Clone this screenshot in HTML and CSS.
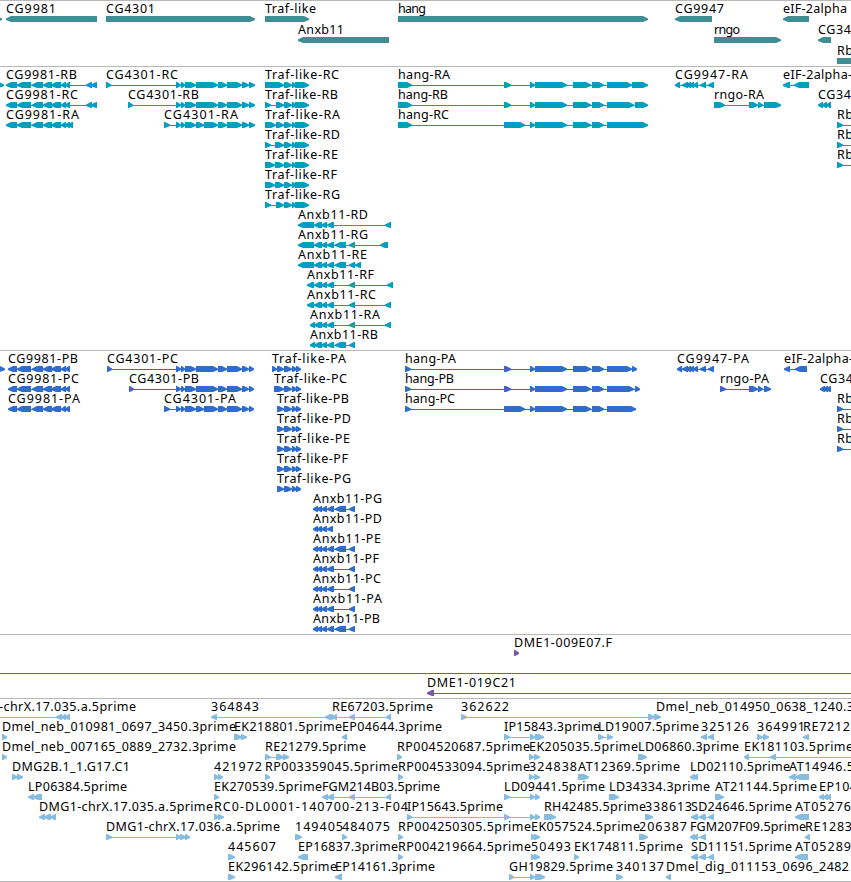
FILE: index.html
```
<!DOCTYPE html>
<html>

<head>
	<meta charset="utf-8">
	<title>Genome browser</title>
	<link rel="stylesheet" href="styles.css">
</head>

<body>
	<div id="browser">
		<svg class="track genes" id="genes" width="851" height="65"></svg>
		<svg class="track transcripts" id="transcripts" width="851" height="283"></svg>
		<svg class="track proteins" id="proteins" width="851" height="283"></svg>
		<svg class="track bacs" id="bacs" width="851" height="63"></svg>
		<svg class="track ests" id="ests" width="851" height="182"></svg>
	</div>
	<script src="tracks.js"></script>
</body>

</html>
```

FILE: styles.css
```
body {
	margin: 0;
	background: #fff;
}

#browser {
	width: 851px;
	height: 881px;
	overflow: hidden;
	border-bottom: 1px solid #b8b8b8;
}

.track {
	display: block;
	border-top: 1px solid #b8b8b8;
	overflow: hidden;
}

.track text {
	font-family: "Noto Sans", "DejaVu Sans", sans-serif;
	font-size: 12.5px;
	fill: #000;
}

.genes {
	fill: #408e94;
}

.transcripts {
	fill: #009ec0;
}

.proteins {
	fill: #306ccc;
}

.bacs {
	fill: #7755aa;
}

.ests {
	fill: #86bcdf;
}
```

FILE: tracks.js
```
// feature: [row, strand, label, label end, blocks, line end (optional)]
var hangEnd = ' 530-535 535-567 573-591 592-604 ';
var cgLeft = '17-31 32-43 43-52 51-61 61-66 65-70';
var cgRight = ' 176-181 181-185 185-196 196-218 218-227 227-242 242-249 ';
var cgShort = ' 176-181 181-185 185-196 196-204 204-218 218-227 227-242 242-249 ';
var trafR = ' 284-292 292-296 295-309';
var trafP = ' 284-292 292-297 296-301';
var anxR = ' 314-322 321-327 327-334';
var anxP = '313-318 317-322 321-327 327-334';

var tracks = {
	genes: [
		[0, '+', '', 0, '-6-2'],
		[0, '-', 'CG9981', 56, '6-97'],
		[0, '+', 'CG4301', 155, '106-255'],
		[0, '+', 'Traf-like', 316, '265-309'],
		[1, '-', 'Anxb11', 344, '298-389'],
		[0, '+', 'hang', 426, '398-648'],
		[0, '-', 'CG9947', 724, '675-712'],
		[1, '+', 'rngo', 740, '714-781'],
		[0, '-', 'eIF-2alpha', 847, '783-809'],
		[1, '-', 'CG34', 851, '818-831'],
		[2, '+', 'Rb', 853, '837-870']
	],
	transcripts: [
		[0, '+', '', 0, '-4-4'],
		[0, '-', 'CG9981-RB', 77, '6-17 ' + cgLeft + ' 86-92 91-97'],
		[1, '-', 'CG9981-RC', 78, '6-17 ' + cgLeft + ' 86-92 91-97'],
		[2, '-', 'CG9981-RA', 79, '6-17 ' + cgLeft + ' 68-73'],
		[0, '+', 'CG4301-RC', 178, '106-111' + cgRight + '249-255'],
		[1, '+', 'CG4301-RB', 199, '128-133' + cgRight + '249-255'],
		[2, '+', 'CG4301-RA', 238, '164-170' + cgShort + '249-255'],
		[0, '+', 'Traf-like-RC', 339, '265-284' + trafR],
		[1, '+', 'Traf-like-RB', 338, '265-271 276-284' + trafR],
		[2, '+', 'Traf-like-RA', 340, '265-276 276-284' + trafR],
		[3, '+', 'Traf-like-RD', 340, '265-271 275-284' + trafR],
		[4, '+', 'Traf-like-RE', 338, '265-275 275-284' + trafR],
		[5, '+', 'Traf-like-RF', 337, '265-275 275-284' + trafR],
		[6, '+', 'Traf-like-RG', 340, '265-271 276-284' + trafR],
		[7, '-', 'Anxb11-RD', 368, '298-314' + anxR + ' 385-391'],
		[8, '-', 'Anxb11-RG', 368, '298-314' + anxR + ' 335-346 349-355 380-388'],
		[9, '-', 'Anxb11-RE', 367, '298-314' + anxR + ' 335-346 349-355 355-361'],
		[10, '-', 'Anxb11-RF', 374, '307-314' + anxR + ' 349-355 387-393'],
		[11, '-', 'Anxb11-RC', 376, '307-314' + anxR + ' 349-355 385-391'],
		[12, '-', 'Anxb11-RA', 380, '310-315' + anxR + ' 349-355 385-391'],
		[13, '-', 'Anxb11-RB', 378, '310-315' + anxR + ' 335-346 349-355'],
		[0, '+', 'hang-RA', 450, '398-412 504-511' + hangEnd + '607-632 632-648'],
		[1, '+', 'hang-RB', 448, '398-412 504-511' + hangEnd + '607-634 635-648'],
		[2, '+', 'hang-RC', 449, '398-412 504-525' + hangEnd + '607-648'],
		[0, '-', 'CG9947-RA', 748, '675-680 682-688 686-691 689-694 693-698 700-706 708-714'],
		[1, '+', 'rngo-RA', 764, '714-725 749-758 758-763 764-781'],
		[0, '-', 'eIF-2alpha-', 852, '783-790 794-809'],
		[1, '-', 'CG34', 851, '818-823 822-827 826-831'],
		[2, '+', 'Rb', 853, '837-843', 851],
		[3, '+', 'Rb', 853, '837-843', 851],
		[4, '+', 'Rb', 853, '837-843', 851]
	],
	proteins: [
		[0, '+', '', 0, '-1-5'],
		[0, '-', 'CG9981-PB', 78, '8-17 ' + cgLeft],
		[1, '-', 'CG9981-PC', 79, '8-17 ' + cgLeft],
		[2, '-', 'CG9981-PA', 80, '8-17 ' + cgLeft],
		[0, '+', 'CG4301-PC', 178, '107-112' + cgRight + '249-254'],
		[1, '+', 'CG4301-PB', 199, '129-134' + cgRight + '249-254'],
		[2, '+', 'CG4301-PA', 236, '164-170' + cgShort + '249-254'],
		[0, '+', 'Traf-like-PA', 346, '272-277 277-284' + trafP],
		[1, '+', 'Traf-like-PC', 347, '274-284' + trafP],
		[2, '+', 'Traf-like-PB', 349, '277-284' + trafP],
		[3, '+', 'Traf-like-PD', 351, '277-284' + trafP],
		[4, '+', 'Traf-like-PE', 350, '277-284' + trafP],
		[5, '+', 'Traf-like-PF', 348, '277-284' + trafP],
		[6, '+', 'Traf-like-PG', 351, '277-284' + trafP],
		[7, '-', 'Anxb11-PG', 382, anxP + ' 335-346 349-355'],
		[8, '-', 'Anxb11-PD', 382, '313-318 317-322 321-327 327-333'],
		[9, '-', 'Anxb11-PE', 381, anxP + ' 335-346 349-355'],
		[10, '-', 'Anxb11-PF', 379, anxP + ' 349-355'],
		[11, '-', 'Anxb11-PC', 381, anxP + ' 349-355'],
		[12, '-', 'Anxb11-PA', 382, anxP + ' 349-355'],
		[13, '-', 'Anxb11-PB', 380, anxP + ' 335-346 349-355'],
		[0, '+', 'hang-PA', 456, '405-411 504-511' + hangEnd + '607-632 632-637'],
		[1, '+', 'hang-PB', 454, '405-411 504-511' + hangEnd + '607-634 635-640'],
		[2, '+', 'hang-PC', 455, '405-411 504-525' + hangEnd + '607-636'],
		[0, '-', 'CG9947-PA', 749, '677-682 682-688 686-691 689-694 693-698 700-706 708-714'],
		[1, '+', 'rngo-PA', 769, '720-726 749-758 758-763 764-771'],
		[0, '-', 'eIF-2alpha-', 853, '784-790 795-807'],
		[1, '-', 'CG34', 853, '820-825 823-828 826-831'],
		[2, '+', 'Rb', 853, '837-843', 851],
		[3, '+', 'Rb', 853, '837-843', 851],
		[4, '+', 'Rb', 853, '837-843', 851]
	],
	bacs: [
		[0, '+', 'DME1-009E07.F', 612, '514-519'],
		[1, '+', '', 0, '-10--4', 851],
		[2, '-', 'DME1-019C21', 516, '427-434', 851]
	],
	ests: [
		[0, '-', '-chrX.17.035.a.5prime', 136, '-1-0 56-62 61-66 65-70'],
		[0, '-', '364843', 259, '211-217 325-331 329-333'],
		[0, '-', 'RE67203.5prime', 433, '332-337 349-355 386-391'],
		[0, '+', '362622', 509, '461-467 648-655 654-661'],
		[0, '+', 'Dmel_neb_014950_0638_1240.3', 854, '656-656'],
		[1, '+', 'Dmel_neb_010981_0697_3450.3prime', 236, '2-7'],
		[1, '+', 'EK218801.5prime', 342, '234-242 241-247'],
		[1, '-', 'EP04644.3prime', 442, '342-347'],
		[1, '+', 'IP15843.3prime', 600, '504-510 530-535 535-544'],
		[1, '+', 'LD19007.5prime', 699, '598-604 607-613'],
		[1, '-', '325126', 749, '701-707 708-714'],
		[1, '+', '364991', 805, '757-763 763-769'],
		[1, '-', 'RE7212', 850, '803-809'],
		[2, '+', 'Dmel_neb_007165_0889_2732.3prime', 236, '2-7'],
		[2, '+', 'RE21279.5prime', 366, '265-271 276-284 283-289'],
		[2, '+', 'RP004520687.5prime', 530, '397-402'],
		[2, '+', 'EK205035.5prime', 638, '529-534 534-540'],
		[2, '+', 'LD06860.3prime', 739, '638-647'],
		[2, '-', 'EK181103.5prime', 853, '744-749 770-776', 851],
		[3, '+', 'DMG2B.1_1.G17.C1', 130, '12-18 17-23'],
		[3, '+', '421972', 262, '214-219 218-223'],
		[3, '+', 'RP003359045.5prime', 398, '265-270'],
		[3, '+', 'RP004533094.5prime', 530, '398-403'],
		[3, '+', '324838', 577, '529-534 534-540'],
		[3, '+', 'AT12369.5prime', 680, '578-589'],
		[3, '-', 'LD02110.5prime', 790, '690-695 693-698'],
		[3, '-', 'AT14946.5', 854, '789-796 795-809'],
		[4, '-', 'LP06384.5prime', 127, '28-34 33-42'],
		[4, '+', 'EK270539.5prime', 322, '214-219'],
		[4, '-', 'FGM214B03.5prime', 440, '322-328 327-334 349-355 386-391'],
		[4, '+', 'LD09441.5prime', 605, '504-510 530-535 535-540'],
		[4, '+', 'LD34334.3prime', 710, '609-619'],
		[4, '+', 'AT21144.5prime', 817, '715-724'],
		[4, '-', 'EP104', 857, '819-824 823-828 826-831'],
		[5, '-', 'DMG1-chrX.17.035.a.5prime', 213, '39-45 44-51 50-56'],
		[5, '+', 'RC0-DL0001-140700-213-F04', 408, '214-219 218-224'],
		[5, '+', 'IP15643.5prime', 503, '407-412 504-510 530-535 535-540'],
		[5, '+', 'RH42485.5prime', 646, '544-556'],
		[5, '+', '338613', 692, '645-653'],
		[5, '-', 'SD24646.5prime', 792, '691-698 699-706 708-714'],
		[5, '-', 'AT05276', 851, '795-809'],
		[6, '+', 'DMG1-chrX.17.036.a.5prime', 280, '106-112 176-181 180-186 185-190'],
		[6, '+', '149405', 343, '295-302'],
		[6, '+', '484075', 390, '342-347'],
		[6, '+', 'RP004250305.5prime', 531, '398-403'],
		[6, '+', 'EK057524.5prime', 640, '531-536 534-540'],
		[6, '+', '206387', 687, '639-648'],
		[6, '-', 'FGM207F09.5prime', 806, '690-695 693-698 700-706'],
		[6, '-', 'RE1283', 852, '805-810'],
		[7, '+', '445607', 276, '228-235'],
		[7, '-', 'EP16837.3prime', 398, '298-308'],
		[7, '+', 'RP004219664.5prime', 531, '398-403'],
		[7, '+', '50493', 571, '531-536 534-540'],
		[7, '+', 'EK174811.5prime', 683, '574-579'],
		[7, '-', 'SD11151.5prime', 792, '691-698 699-706 708-714'],
		[7, '-', 'AT05289', 851, '795-808'],
		[8, '+', 'EK296142.5prime', 337, '228-235'],
		[8, '-', 'EP14161.3prime', 435, '335-342'],
		[8, '+', 'GH19829.5prime', 613, '509-514 530-535 535-545'],
		[8, '+', '340137', 664, '616-623'],
		[8, '-', 'Dmel_dig_011153_0696_2482', 849, '666-671']
	]
};

function add(svg, name, attrs) {
	var el = document.createElementNS('http://www.w3.org/2000/svg', name);
	for (var key in attrs) {
		el.setAttribute(key, attrs[key]);
	}
	svg.appendChild(el);
	return el;
}

// block 6px high, pointed in the direction of the strand
function drawBlock(svg, x1, x2, y, strand) {
	var width = x2 - x1;
	var tip = Math.min(width - 1, 5);
	var tail = x1, neck = x2 - tip, end = x2;
	if (strand == '-') {
		tail = x2;
		neck = x1 + tip;
		end = x1;
	}
	add(svg, 'path', {
		d: 'M' + tail + ' ' + y + 'H' + neck + 'L' + end + ' ' + (y + 2.5) +
			'V' + (y + 4) + 'L' + neck + ' ' + (y + 6) + 'H' + tail + 'Z'
	});
}

function drawTrack(id, pitch) {
	var svg = document.getElementById(id);
	tracks[id].forEach(function (f) {
		var y = 15 + f[0] * pitch;
		var blocks = f[4].split(' ').map(function (b) {
			var m = b.match(/^(-?\d+)-(-?\d+)$/);
			return [+m[1], +m[2]];
		});
		var start = blocks[0][0];
		var end = f[5] || blocks[blocks.length - 1][1];
		if (end > start) {
			add(svg, 'rect', { x: start, y: y + 3, width: end - start, height: 1 });
		}
		blocks.forEach(function (b) {
			if (b[1] > b[0]) {
				drawBlock(svg, b[0], b[1], y, f[1]);
			}
		});
		if (f[2]) {
			add(svg, 'text', { x: start, y: y - 3, textLength: f[3] - start }).textContent = f[2];
		}
	});
}

drawTrack('genes', 21);
drawTrack('transcripts', 20);
drawTrack('proteins', 20);
drawTrack('bacs', 20);
drawTrack('ests', 20);
```
